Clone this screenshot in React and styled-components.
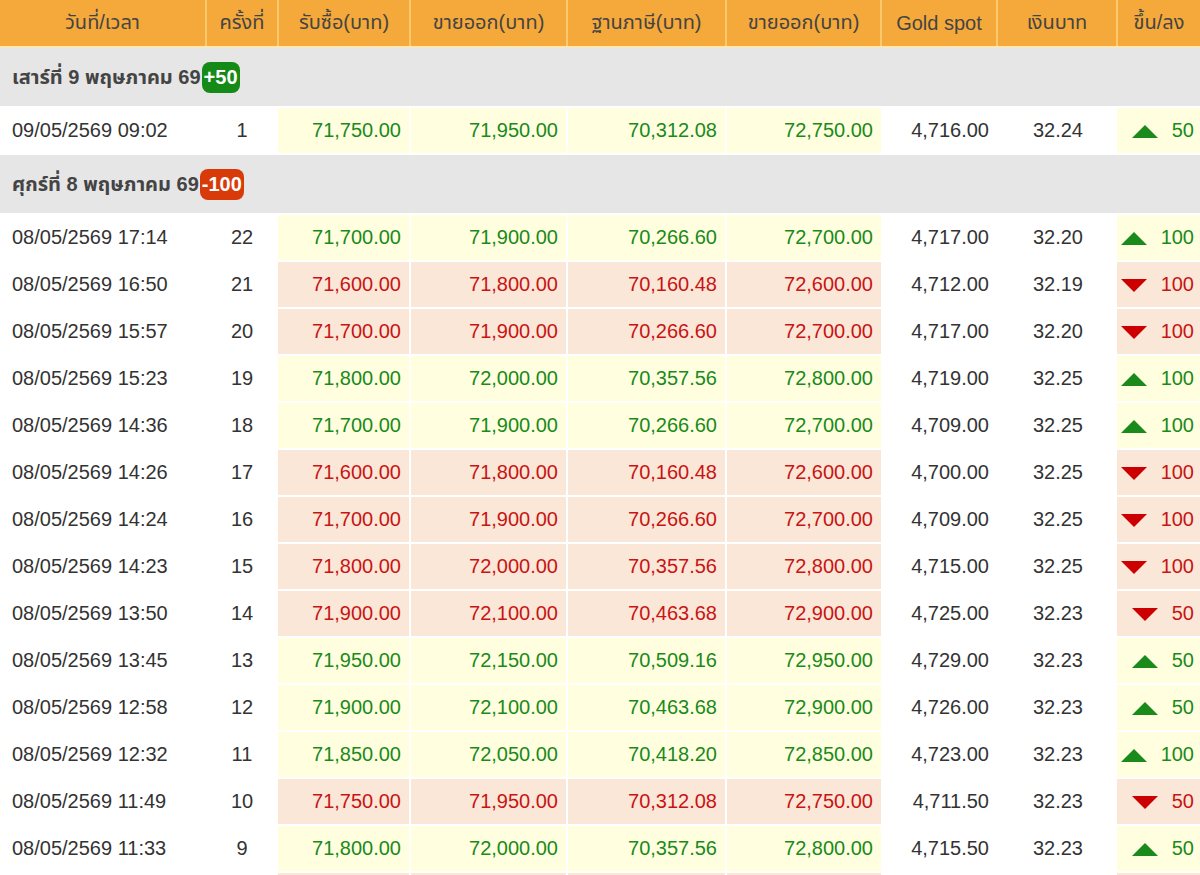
import React from "react";
import styled, { createGlobalStyle } from "styled-components";

const G = createGlobalStyle`
  body { margin: 0; background: #fff; font-family: "Liberation Sans", "Noto Sans", "Noto Sans Thai", sans-serif; }
`;
const Table = styled.table`
  border-collapse: collapse; width: 1200px; table-layout: fixed; font-size: 20px; color: #333;
`;
const Th = styled.th`
  background: #f5a93b; color: #444; font-weight: normal; height: 46px; padding: 0;
  border-left: 2px solid #fcc96f; border-bottom: 2px solid #fde7b8; text-align: center;
  &:first-child { border-left: none; }
`;
const GroupCell = styled.td`
  background: #e6e6e6; height: 58px; padding: 0 0 0 12px; font-weight: bold; color: #444;
  border-bottom: 2px solid #fff;
`;
const Badge = styled.span`
  display: inline-block; background: ${p => p.$up ? "#168a16" : "#d93a0a"}; color: #fff;
  border-radius: 8px; padding: 4px 2px; margin-left: 1px; font-weight: bold;
`;
const Td = styled.td`
  height: 45px; padding: 0 ${p => p.$pr ?? 8}px 0 ${p => p.$pl ?? 0}px;
  text-align: ${p => p.$align || "right"}; border-bottom: 2px solid #fff;
  border-left: ${p => p.$bl ? "2px solid #fff" : "none"};
  background: ${p => p.$tint ? (p.$up ? "#ffffe0" : "#fbe7d7") : "#fff"};
  color: ${p => p.$colored ? (p.$up ? "#1a8a1a" : "#c81414") : "#333"};
`;
const Arrow = styled.span`
  display: inline-block; width: 0; height: 0; margin-right: 14px; vertical-align: middle;
  border-left: 13px solid transparent; border-right: 13px solid transparent;
  ${p => p.$up ? "border-bottom: 13px solid #1a8a1a;" : "border-top: 13px solid #cc0000;"}
`;

const rows = [
  ["08/05/2569 17:14",22,"71,700.00","71,900.00","70,266.60","72,700.00","4,717.00","32.20",1,100],
  ["08/05/2569 16:50",21,"71,600.00","71,800.00","70,160.48","72,600.00","4,712.00","32.19",0,100],
  ["08/05/2569 15:57",20,"71,700.00","71,900.00","70,266.60","72,700.00","4,717.00","32.20",0,100],
  ["08/05/2569 15:23",19,"71,800.00","72,000.00","70,357.56","72,800.00","4,719.00","32.25",1,100],
  ["08/05/2569 14:36",18,"71,700.00","71,900.00","70,266.60","72,700.00","4,709.00","32.25",1,100],
  ["08/05/2569 14:26",17,"71,600.00","71,800.00","70,160.48","72,600.00","4,700.00","32.25",0,100],
  ["08/05/2569 14:24",16,"71,700.00","71,900.00","70,266.60","72,700.00","4,709.00","32.25",0,100],
  ["08/05/2569 14:23",15,"71,800.00","72,000.00","70,357.56","72,800.00","4,715.00","32.25",0,100],
  ["08/05/2569 13:50",14,"71,900.00","72,100.00","70,463.68","72,900.00","4,725.00","32.23",0,50],
  ["08/05/2569 13:45",13,"71,950.00","72,150.00","70,509.16","72,950.00","4,729.00","32.23",1,50],
  ["08/05/2569 12:58",12,"71,900.00","72,100.00","70,463.68","72,900.00","4,726.00","32.23",1,50],
  ["08/05/2569 12:32",11,"71,850.00","72,050.00","70,418.20","72,850.00","4,723.00","32.23",1,100],
  ["08/05/2569 11:49",10,"71,750.00","71,950.00","70,312.08","72,750.00","4,711.50","32.23",0,50],
  ["08/05/2569 11:33",9,"71,800.00","72,000.00","70,357.56","72,800.00","4,715.50","32.23",1,50],
  ["08/05/2569 11:20",8,"71,750.00","71,950.00","70,312.08","72,750.00","4,712.00","32.23",0,50],
];

const Row = ({ r }) => {
  const up = !!r[8];
  return (
    <tr>
      <Td $align="left" $pl={12} $pr={0}>{r[0]}</Td>
      <Td $align="center" $pr={0}>{r[1]}</Td>
      {[2,3,4,5].map(i => <Td key={i} $tint $colored $up={up} $bl={i>2} $pr={8}>{r[i]}</Td>)}
      <Td $pr={8}>{r[6]}</Td>
      <Td $pr={34}>{r[7]}</Td>
      <Td $tint $colored $up={up} $pr={6}><Arrow $up={up} />{r[9]}</Td>
    </tr>
  );
};

export default function App() {
  const widths = [206,72,132,157,159,155,116,120,83];
  return (
    <>
      <G />
      <Table>
        <colgroup>{widths.map((w,i) => <col key={i} style={{ width: w }} />)}</colgroup>
        <thead>
          <tr>
            {["วันที่/เวลา","ครั้งที่","รับซื้อ(บาท)","ขายออก(บาท)","ฐานภาษี(บาท)","ขายออก(บาท)","Gold spot","เงินบาท","ขึ้น/ลง"].map((h,i) => <Th key={i}>{h}</Th>)}
          </tr>
        </thead>
        <tbody>
          <tr><GroupCell colSpan={9}>เสาร์ที่ 9 พฤษภาคม 69<Badge $up>+50</Badge></GroupCell></tr>
          <Row r={["09/05/2569 09:02",1,"71,750.00","71,950.00","70,312.08","72,750.00","4,716.00","32.24",1,50]} />
          <tr><GroupCell colSpan={9}>ศุกร์ที่ 8 พฤษภาคม 69<Badge>-100</Badge></GroupCell></tr>
          {rows.map((r,i) => <Row key={i} r={r} />)}
        </tbody>
      </Table>
    </>
  );
}
